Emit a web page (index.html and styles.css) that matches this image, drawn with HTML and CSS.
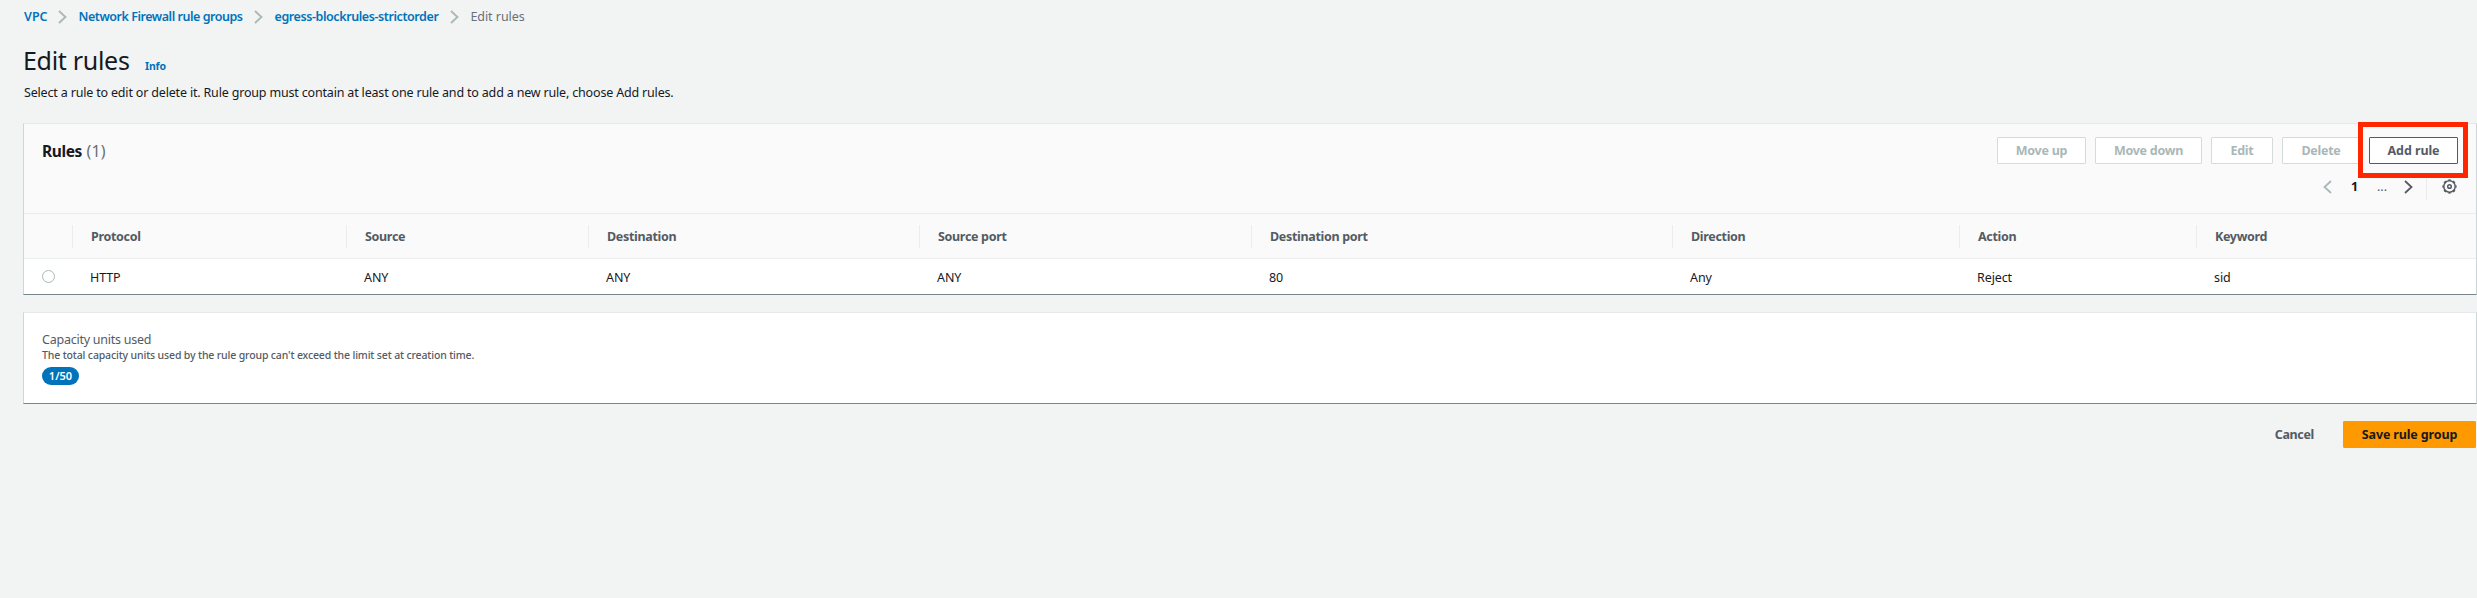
FILE: index.html
```html
<!DOCTYPE html>
<html lang="en">
<head>
<meta charset="utf-8">
<title>Edit rules</title>
<link rel="stylesheet" href="styles.css">
</head>
<body>
<nav class="crumbs">
  <a class="crumb-vpc">VPC</a>
  <svg class="sep" viewBox="0 0 9 14"><path d="M1 1l6.5 6L1 13"/></svg>
  <a>Network Firewall rule groups</a>
  <svg class="sep" viewBox="0 0 9 14"><path d="M1 1l6.5 6L1 13"/></svg>
  <a class="crumb-group">egress-blockrules-strictorder</a>
  <svg class="sep" viewBox="0 0 9 14"><path d="M1 1l6.5 6L1 13"/></svg>
  <span class="current">Edit rules</span>
</nav>
<header class="page-head">
  <h1>Edit rules</h1>
  <a class="info">Info</a>
</header>
<p class="description">Select a rule to edit or delete it. Rule group must contain at least one rule and to add a new rule, choose Add rules.</p>

<section class="card rules">
  <div class="toolbar">
    <h2>Rules <span>(1)</span></h2>
    <div class="tools">
      <div class="actions">
        <button class="btn move-up" disabled>Move up</button>
        <button class="btn move-down" disabled>Move down</button>
        <button class="btn edit" disabled>Edit</button>
        <button class="btn delete" disabled>Delete</button>
        <div class="add-wrap">
          <button class="btn add">Add rule</button>
          <div class="highlight"></div>
        </div>
      </div>
      <div class="pager">
        <svg class="arrow prev" viewBox="0 0 9 14"><path d="M8 1L1.5 7 8 13"/></svg>
        <b>1</b>
        <span class="dots">...</span>
        <svg class="arrow next" viewBox="0 0 9 14"><path d="M1 1l6.5 6L1 13"/></svg>
        <i class="rule"></i>
        <svg class="gear" viewBox="0 0 15 15"><circle cx="7.5" cy="7.5" r="5.7"/><circle class="teeth" cx="7.5" cy="7.5" r="6.5" pathLength="16" stroke-dasharray="1 1" stroke-dashoffset=".5"/><circle cx="7.5" cy="7.5" r="1.8"/></svg>
      </div>
    </div>
  </div>
  <div class="row head">
    <div></div><div>Protocol</div><div>Source</div><div>Destination</div><div>Source port</div><div>Destination port</div><div>Direction</div><div>Action</div><div>Keyword</div>
  </div>
  <div class="row data">
    <div><span class="radio"></span></div><div>HTTP</div><div>ANY</div><div>ANY</div><div>ANY</div><div>80</div><div>Any</div><div>Reject</div><div>sid</div>
  </div>
</section>

<section class="card capacity">
  <div class="cap-title">Capacity units used</div>
  <div class="cap-note">The total capacity units used by the rule group can't exceed the limit set at creation time.</div>
  <span class="badge">1/50</span>
</section>

<footer class="foot">
  <a class="cancel">Cancel</a>
  <button class="btn save">Save rule group</button>
</footer>
</body>
</html>
```

FILE: styles.css
```css
* { box-sizing: border-box; }

body {
  margin: 0;
  padding: 6px 0 0 23px;
  height: 598px;
  overflow: hidden;
  background: #f2f3f3;
  color: #16191f;
  font: 12.5px/20px "Noto Sans", sans-serif;
}

svg { display: block; fill: none; }

.crumbs {
  display: flex;
  align-items: center;
  height: 21px;
  padding-left: 1px;
  line-height: 21px;
}
.crumbs a { color: #0073bb; font-weight: 600; letter-spacing: -.47px; }
.crumbs .crumb-vpc { margin-right: -1px; letter-spacing: 0; }
.crumbs .crumb-group { letter-spacing: -.42px; }
.crumbs .current { color: #687078; letter-spacing: -.05px; }
.sep { width: 9px; height: 14px; margin: 0 11.5px; stroke: #aab7b8; stroke-width: 1.8; }

.page-head {
  display: flex;
  align-items: baseline;
  height: 34px;
  margin-top: 16px;
}
h1 { margin: 0; font-size: 25px; line-height: 34px; font-weight: 400; letter-spacing: -.3px; }
.info { margin-left: 15.5px; color: #0073bb; font-size: 10.5px; font-weight: 700; letter-spacing: -.18px; }

.description { margin: 6px 0 0 1px; letter-spacing: -.175px; }

.card {
  border: 1px solid #cfd6d7;
  border-top-color: #e6e9e9;
  border-bottom-color: #77868a;
  background: #fff;
}

.rules { height: 172px; margin-top: 20px; }
.toolbar {
  display: flex;
  justify-content: space-between;
  height: 90px;
  padding: 13px 18px 0 18px;
  background: #fafafa;
  border-bottom: 1px solid #eaeded;
}
h2 { margin: 0; font-size: 15.5px; line-height: 28px; font-weight: 700; letter-spacing: -.4px; }
h2 span { margin-left: 1px; color: #687078; font-weight: 400; font-size: 16px; letter-spacing: .1px; }

.actions { display: flex; gap: 9px; }
.btn {
  height: 27px;
  padding: 0;
  border: 1px solid #545b64;
  border-radius: 1px;
  background: #fff;
  color: #545b64;
  font: 700 12.5px/25px "Noto Sans", sans-serif;
  letter-spacing: -.25px;
  white-space: nowrap;
}
.btn:disabled { border-color: #d5dbdb; color: #aab7b8; }
.move-up { width: 89px; }
.move-down { width: 107px; }
.edit { width: 62px; }
.delete { width: 78px; }
.add { width: 89px; letter-spacing: -.08px; }
.add-wrap { position: relative; }
.highlight {
  position: absolute;
  left: -11px;
  top: -15px;
  width: 110px;
  height: 56px;
  border: 5px solid #ff2600;
}

.pager {
  display: flex;
  justify-content: flex-end;
  align-items: center;
  height: 27px;
  margin-top: 9px;
}
.arrow { width: 9px; height: 14px; stroke: #545b64; stroke-width: 1.8; }
.arrow.prev { stroke: #aab7b8; }
.pager b { margin-left: 19px; width: 8px; }
.dots { margin-left: 18px; width: 10px; color: #545b64; }
.arrow.next { margin-left: 17px; }
.rule { width: 1px; height: 27px; margin-left: 13px; background: #eaeded; }
.gear { width: 15px; height: 15px; margin: 0 1px 0 15px; stroke: #545b64; stroke-width: 1.5; }
.teeth { stroke-width: 1.3; }

.row {
  display: grid;
  grid-template-columns: 48px 274px 242px 331px 332px 421px 287px 237px 1fr;
}
.head {
  height: 45px;
  padding: 11px 0;
  background: #fafafa;
  border-bottom: 1px solid #eaeded;
  color: #545b64;
  font-weight: 700;
  line-height: 23px;
  letter-spacing: -.32px;
}
.head div + div { padding-left: 18px; border-left: 1px solid #eaeded; }
.data { height: 35px; line-height: 37px; letter-spacing: -.1px; }
.data div + div { padding-left: 18px; }
.radio {
  display: block;
  width: 13px;
  height: 13px;
  margin: 11px 0 0 18px;
  border: 1px solid #aab7b8;
  border-radius: 50%;
}

.capacity {
  height: 92px;
  margin-top: 17px;
  padding: 18px 18px;
  color: #545b64;
}
.cap-title { letter-spacing: -.24px; line-height: 18px; }
.cap-note { font-size: 10.5px; font-weight: 500; line-height: 13px; letter-spacing: -.14px; }
.badge {
  display: block;
  width: 37px;
  height: 18px;
  margin-top: 5px;
  border-radius: 9px;
  background: #0073bb;
  color: #fff;
  font-size: 11px;
  font-weight: 600;
  line-height: 18px;
  text-align: center;
}

.foot {
  display: flex;
  justify-content: flex-end;
  align-items: center;
  gap: 29px;
  margin: 17px 1px 0 0;
}
.cancel { color: #545b64; font-weight: 700; letter-spacing: -.33px; }
.save { width: 133px; border-color: #f90; background: #f90; color: #16191f; letter-spacing: -.14px; }
```
